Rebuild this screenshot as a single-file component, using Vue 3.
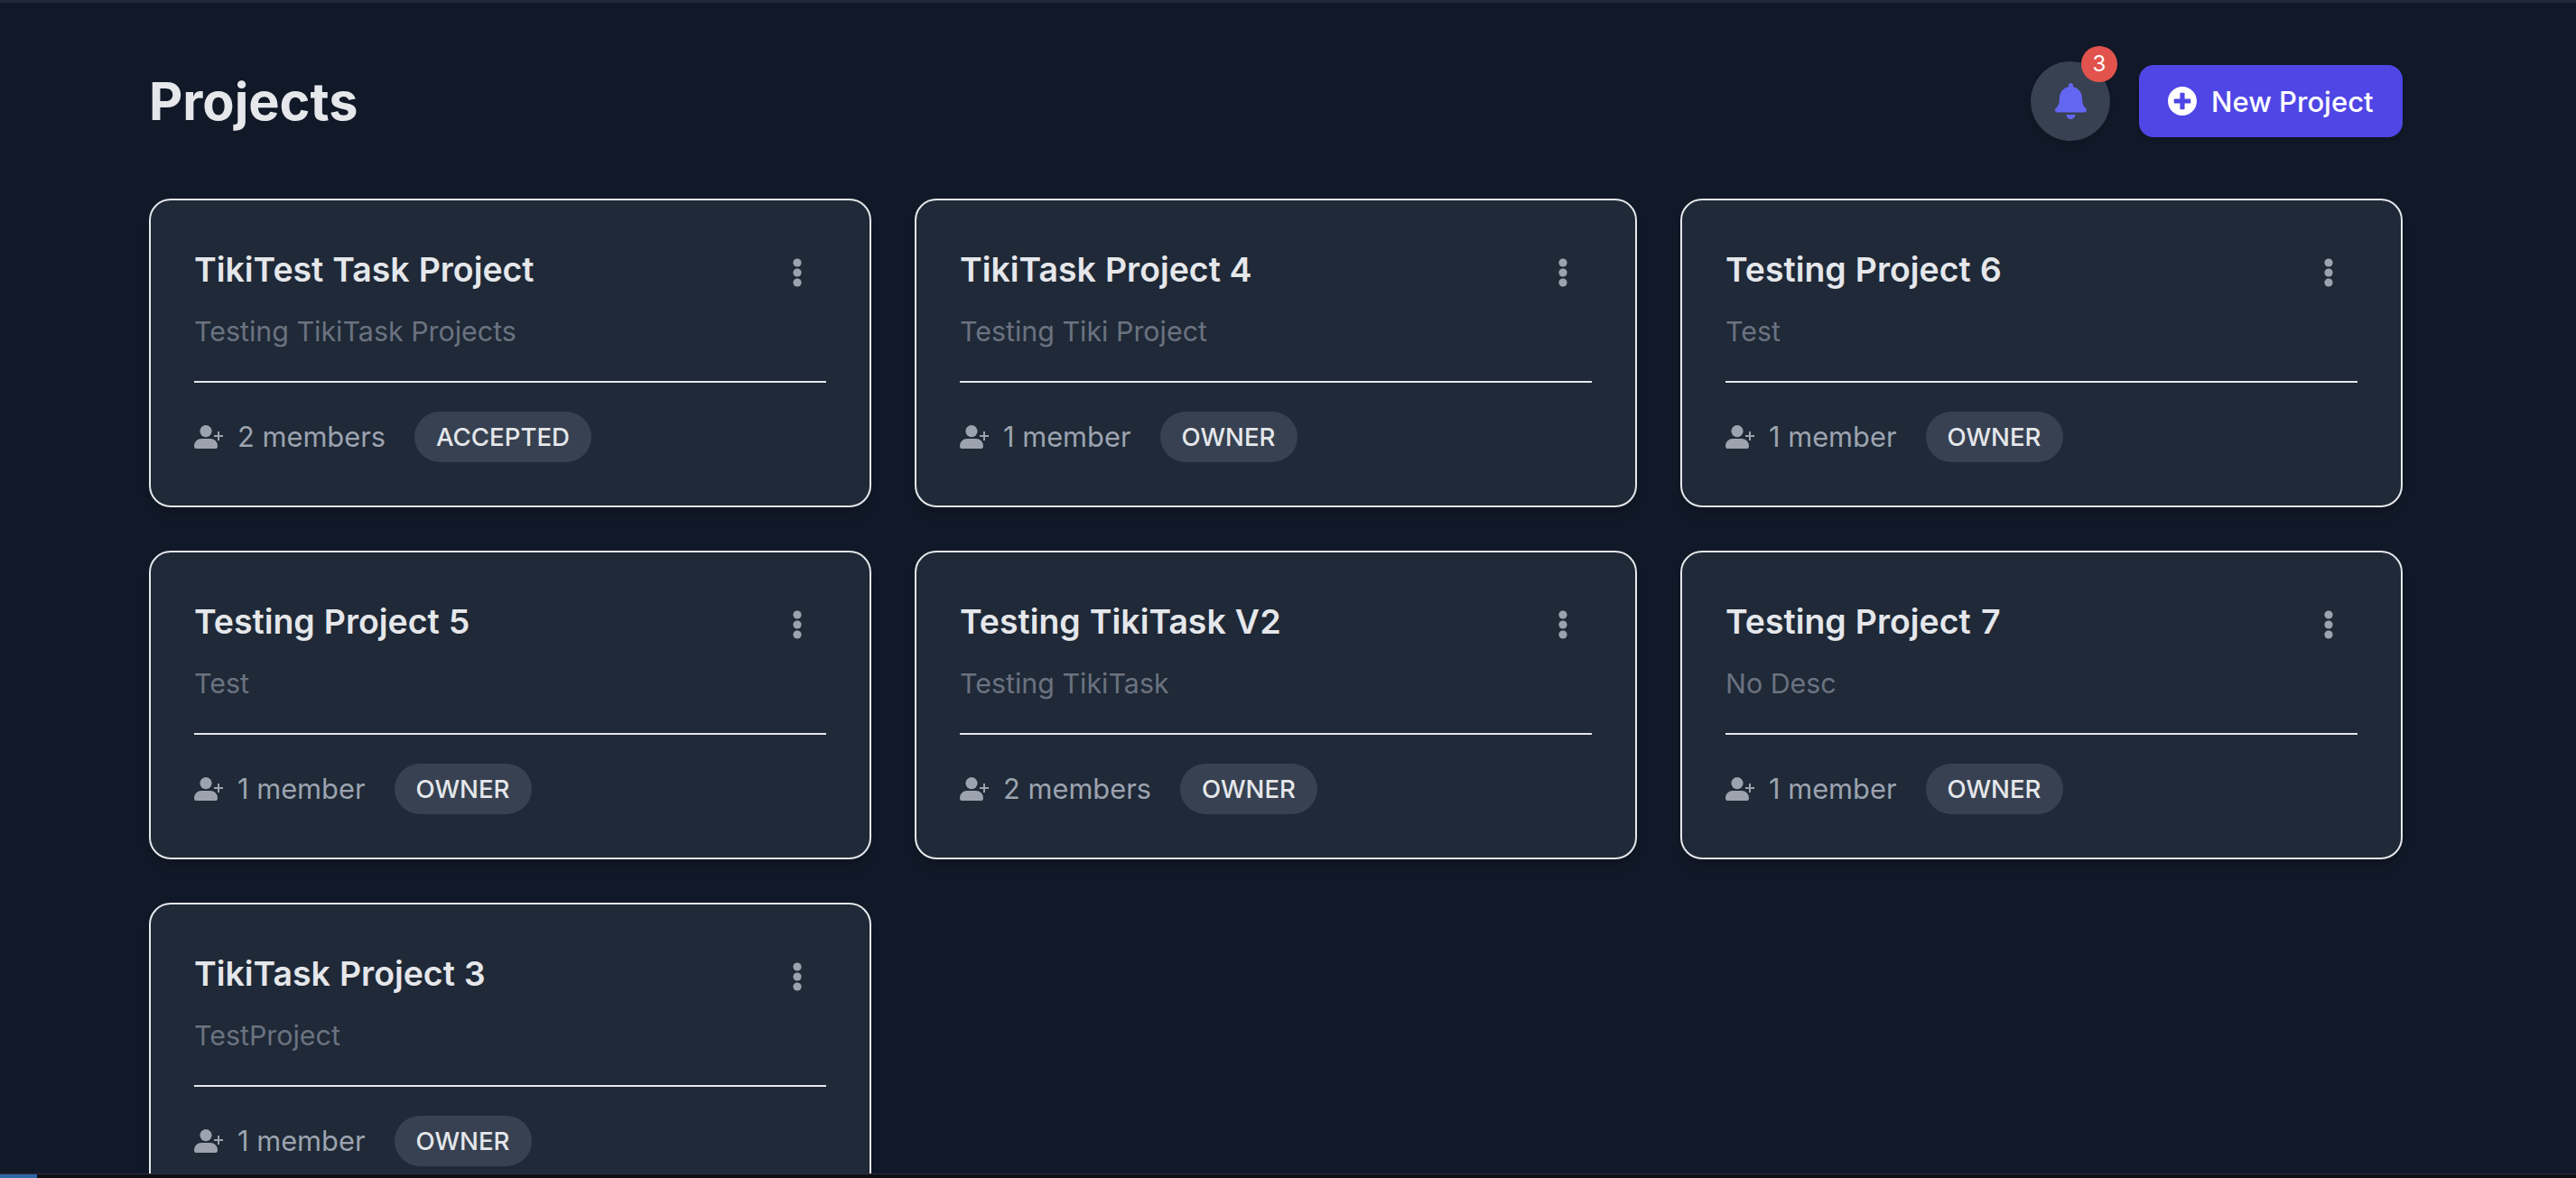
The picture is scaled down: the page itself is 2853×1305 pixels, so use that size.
<script setup>
const projects = [
  { name: 'TikiTest Task Project', desc: 'Testing TikiTask Projects', members: '2 members', role: 'ACCEPTED' },
  { name: 'TikiTask Project 4', desc: 'Testing Tiki Project', members: '1 member', role: 'OWNER' },
  { name: 'Testing Project 6', desc: 'Test', members: '1 member', role: 'OWNER' },
  { name: 'Testing Project 5', desc: 'Test', members: '1 member', role: 'OWNER' },
  { name: 'Testing TikiTask V2', desc: 'Testing TikiTask', members: '2 members', role: 'OWNER' },
  { name: 'Testing Project 7', desc: 'No Desc', members: '1 member', role: 'OWNER' },
  { name: 'TikiTask Project 3', desc: 'TestProject', members: '1 member', role: 'OWNER' },
]
</script>

<template>
  <div class="page">
    <header class="header">
      <h1 class="title">Projects</h1>
      <div class="actions">
        <div class="bell">
          <svg class="bell-icon" viewBox="0 0 448 512" fill="currentColor"><path d="M224 512c35.32 0 63.97-28.65 63.97-64H160.03c0 35.35 28.65 64 63.97 64zm215.39-149.71c-19.32-20.76-55.47-51.99-55.47-154.29 0-77.7-54.48-139.9-127.94-155.16V32c0-17.67-14.32-32-31.98-32s-31.98 14.33-31.98 32v20.84C118.56 68.1 64.08 130.3 64.08 208c0 102.3-36.15 133.53-55.47 154.29-6 6.45-8.66 14.16-8.61 21.71.11 16.4 12.98 32 32.1 32h383.8c19.12 0 32-15.6 32.1-32 .05-7.55-2.61-15.27-8.61-21.71z"/></svg>
          <span class="count">3</span>
        </div>
        <button class="new-btn">
          <svg class="plus-icon" viewBox="8 8 496 496" fill="currentColor"><path d="M256 8C119 8 8 119 8 256s111 248 248 248 248-111 248-248S393 8 256 8zm144 276c0 6.6-5.4 12-12 12h-92v92c0 6.6-5.4 12-12 12h-56c-6.6 0-12-5.4-12-12v-92h-92c-6.6 0-12-5.4-12-12v-56c0-6.6 5.4-12 12-12h92v-92c0-6.6 5.4-12 12-12h56c6.6 0 12 5.4 12 12v92h92c6.6 0 12 5.4 12 12v56z"/></svg>
          New Project
        </button>
      </div>
    </header>

    <main class="grid">
      <article v-for="p in projects" :key="p.name" class="card">
        <div class="card-head">
          <h2 class="card-title">{{ p.name }}</h2>
          <svg class="dots" viewBox="0 0 10 32" fill="currentColor"><circle cx="5" cy="5" r="4.6"/><circle cx="5" cy="16" r="4.6"/><circle cx="5" cy="27" r="4.6"/></svg>
        </div>
        <p class="desc">{{ p.desc }}</p>
        <div class="card-foot">
          <svg class="user-icon" viewBox="0 0 32 26" fill="currentColor"><circle cx="13" cy="6.6" r="6.6"/><path d="M8 15h10a8 8 0 0 1 8 8v0.2A2.8 2.8 0 0 1 23.2 26H2.8A2.8 2.8 0 0 1 0 23.2V23a8 8 0 0 1 8-8z"/><path d="M26 7h2v4h4v2h-4v4h-2v-4h-4v-2h4z"/></svg>
          <span class="members">{{ p.members }}</span>
          <span class="role">{{ p.role }}</span>
        </div>
      </article>
    </main>

    <div class="bottom-strip"><span class="bottom-blue"></span></div>
  </div>
</template>

<style>
html, body { margin: 0; background: #111827; overflow: hidden; }
</style>

<style scoped>
.page {
  position: relative;
  box-sizing: border-box;
  height: 1305px;
  overflow: hidden;
  padding: 68px 192px 0 165px;
  background: #111827;
  border-top: 3px solid #1f2937;
  font-family: Inter, "Noto Sans", sans-serif;
}
.header {
  display: flex;
  align-items: center;
  justify-content: space-between;
  height: 88px;
  margin-top: -3px;
  margin-bottom: 64px;
}
.title {
  margin: 0;
  font-size: 57.6px;
  line-height: 72px;
  font-weight: 700;
  color: #e5e7eb;
}
.actions {
  display: flex;
  align-items: center;
  gap: 32px;
}
.bell {
  position: relative;
  width: 88px;
  height: 88px;
  border-radius: 50%;
  background: #374151;
  color: #6366f1;
  display: flex;
  align-items: center;
  justify-content: center;
  box-shadow: 0 4px 6px rgba(0, 0, 0, 0.1);
}
.bell-icon { width: 35px; height: 40px; }
.count {
  position: absolute;
  top: -17px;
  right: -8px;
  width: 40px;
  height: 40px;
  border-radius: 50%;
  background: #e2534d;
  color: #fff;
  font-size: 24px;
  line-height: 40px;
  text-align: center;
}
.new-btn {
  display: flex;
  align-items: center;
  gap: 16px;
  height: 80px;
  width: 292px;
  padding: 0 32px;
  border: none;
  border-radius: 16px;
  background: #4f46e5;
  color: #fff;
  font-family: inherit;
  font-size: 31px;
  font-weight: 500;
  white-space: nowrap;
  box-sizing: border-box;
  box-shadow: 0 4px 6px rgba(0, 0, 0, 0.1);
}
.plus-icon { width: 32px; height: 32px; flex: none; }
.grid {
  display: grid;
  grid-template-columns: repeat(3, 800px);
  grid-auto-rows: 342px;
  gap: 48px;
}
.card {
  box-sizing: border-box;
  padding: 48px;
  border: 2px solid #e5e7eb;
  border-radius: 24px;
  background: #1f2937;
  box-shadow: 0 10px 15px -3px rgba(0, 0, 0, 0.1), 0 4px 6px -2px rgba(0, 0, 0, 0.05);
}
.card-head {
  display: flex;
  align-items: flex-start;
  justify-content: space-between;
  height: 58px;
}
.card-title {
  margin: 0;
  font-size: 37.44px;
  line-height: 58px;
  font-weight: 600;
  color: #e5e7eb;
  font-variant-numeric: tabular-nums;
}
.dots {
  width: 10px;
  height: 32px;
  margin: 16px 27px 0 0;
  color: #9ca3af;
}
.desc {
  margin: 19px 0 0;
  font-size: 30.4px;
  line-height: 40px;
  color: #6b7280;
}
.card-foot {
  display: flex;
  align-items: center;
  margin-top: 35px;
  padding-top: 32px;
  border-top: 2px solid #e5e7eb;
  height: 56px;
}
.user-icon {
  width: 32px;
  height: 26px;
  flex: none;
  color: #9ca3af;
  margin-right: 16px;
}
.members {
  font-size: 30.8px;
  line-height: 40px;
  color: #9ca3af;
  margin-right: 32px;
}
.role {
  height: 56px;
  line-height: 56px;
  padding: 0 24px;
  border-radius: 28px;
  background: #374151;
  color: #e5e7eb;
  font-size: 27.6px;
  font-weight: 500;
}
.bottom-strip {
  position: absolute;
  left: 0;
  right: 0;
  bottom: 0;
  height: 5px;
  background: #0f1115;
  border-top: 1px solid #2a303a;
  box-sizing: border-box;
}
.bottom-blue {
  display: block;
  width: 41px;
  height: 100%;
  background: #2f66a8;
}
</style>
